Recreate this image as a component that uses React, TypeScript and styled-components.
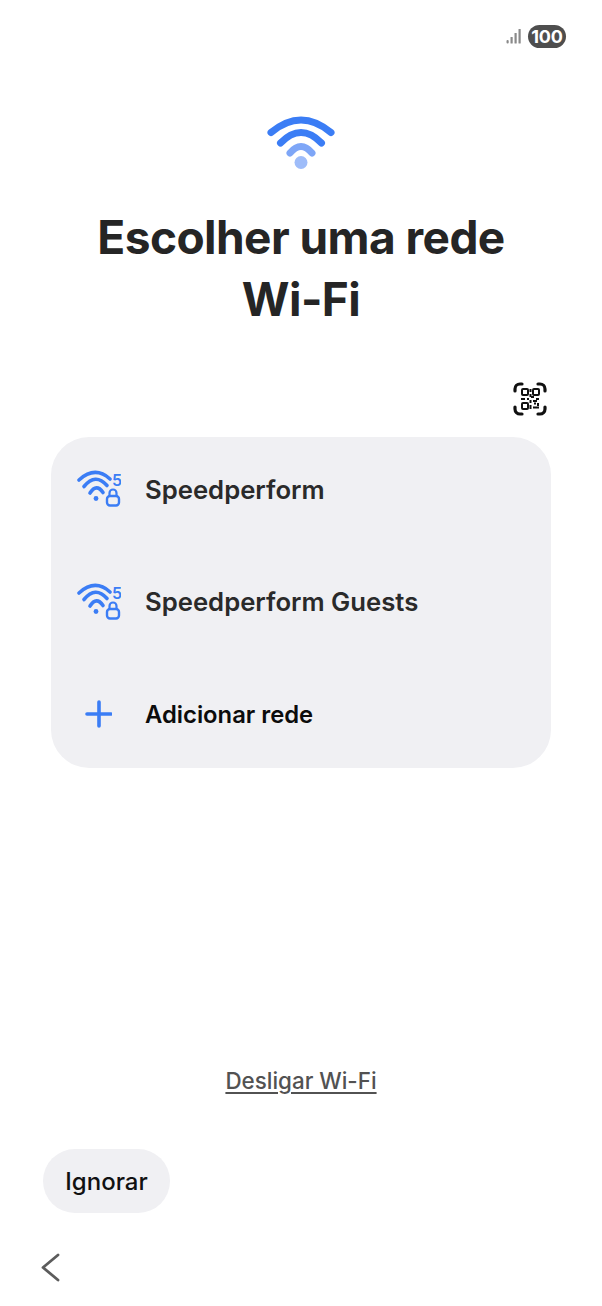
import React from "react";
import styled, { createGlobalStyle } from "styled-components";

const Global = createGlobalStyle`
  html, body { margin: 0; padding: 0; background: #fff; }
  body { font-family: Inter, "Noto Sans", "Liberation Sans", sans-serif; }
`;

const Page = styled.div`
  width: 602px;
  height: 1306px;
  display: flex;
  flex-direction: column;
  overflow: hidden;
  background: #fff;
`;

const StatusBar = styled.div`
  display: flex;
  justify-content: flex-end;
  align-items: center;
  gap: 5px;
  height: 22px;
  margin-top: 25px;
  padding-right: 36px;
`;

const Battery = styled.div`
  width: 38px;
  height: 23px;
  border-radius: 12px;
  background: #4e4e4e;
  color: #fff;
  font-size: 18px;
  font-weight: 700;
  letter-spacing: -0.2px;
  display: flex;
  align-items: center;
  justify-content: center;
`;

const HeroIcon = styled.div`
  display: flex;
  justify-content: center;
  margin-top: 69px;
  height: 54px;
`;

const Title = styled.h1`
  margin: 36px 0 0;
  text-align: center;
  font-size: 46px;
  line-height: 62px;
  font-weight: 700;
  letter-spacing: -0.55px;
  color: #252525;
`;

const QrRow = styled.div`
  display: flex;
  justify-content: flex-end;
  padding-right: 55px;
  margin-top: 52px;
  height: 34px;
`;

const Card = styled.div`
  margin: 21px 51px 0;
  height: 331px;
  border-radius: 38px;
  background: #f0f0f3;
  padding: 0 24px 0 23px;
  display: flex;
  flex-direction: column;
  gap: 8.5px;
  box-sizing: border-box;
`;

const Row = styled.div`
  height: 104px;
  display: flex;
  align-items: center;
  gap: 24px;
`;

const IconSlot = styled.div`
  width: 47px;
  display: flex;
  justify-content: center;
`;

const RowLabel = styled.span<{ $strong?: boolean }>`
  font-size: ${(p) => (p.$strong ? "23.8px" : "25.7px")};
  font-weight: 600;
  color: ${(p) => (p.$strong ? "#0c0c0c" : "#2a2a2a")};
`;

const Spacer = styled.div`
  flex: 1;
`;

const TurnOff = styled.a`
  align-self: center;
  font-size: 22.4px;
  font-weight: 500;
  color: #525252;
  text-decoration: underline;
  text-underline-offset: 3px;
  margin-bottom: 55px;
`;

const Skip = styled.button`
  align-self: flex-start;
  margin-left: 43px;
  width: 127px;
  height: 64px;
  border: 0;
  border-radius: 32px;
  background: #f0f0f3;
  color: #111;
  font-family: inherit;
  font-size: 24px;
  font-weight: 550;
`;

const NavBar = styled.div`
  height: 93px;
  box-sizing: border-box;
  padding: 40px 0 0 40px;
  display: flex;
  align-items: flex-start;
`;

const Signal = () => (
  <svg width="17" height="17" viewBox="0 0 17 17" fill="#8a8a8a">
    <rect x="0.5" y="12" width="2.2" height="3.5" rx="1" />
    <rect x="4.5" y="9" width="2.2" height="6.5" rx="0.6" />
    <rect x="8.5" y="5" width="2.2" height="10.5" rx="0.6" />
    <rect x="12.5" y="1" width="2.2" height="14.5" rx="0.6" />
  </svg>
);

const WifiHero = () => (
  <svg width="68" height="54" viewBox="0 0 68 54" fill="none" strokeLinecap="round">
    <path d="M4 16.5 Q34 -8.5 64 16.5" stroke="#3b7df5" strokeWidth="7" />
    <path d="M13.5 27 Q34 6 54.5 27" stroke="#3b7df5" strokeWidth="7" />
    <path d="M23 37 Q34 24 45 37" stroke="#7ea6f7" strokeWidth="7" />
    <circle cx="34" cy="46.5" r="6.5" fill="#9ebcf9" />
  </svg>
);

const QrIcon = () => (
  <svg width="34" height="34" viewBox="0 0 34 34" fill="none" stroke="#111" strokeWidth="3.2" strokeLinecap="round">
    <path d="M9 2 H7 A5 5 0 0 0 2 7 V9" />
    <path d="M25 2 H27 A5 5 0 0 1 32 7 V9" />
    <path d="M9 32 H7 A5 5 0 0 1 2 27 V25" />
    <path d="M25 32 H27 A5 5 0 0 0 32 27 V25" />
    <g strokeWidth="2" strokeLinecap="butt">
      <rect x="9" y="7" width="6" height="6" rx="1" />
      <rect x="20" y="7" width="6" height="6" rx="1" />
      <rect x="9" y="21" width="6" height="6" rx="1" />
      <path d="M17.5 7v3M17.5 12v3M8 17h4M14 17h2M18 15h3M23 17h3M17.5 18v3M20 19h4M21 21.5h2M25 21v3M17.5 23v4M20 25.5h6" />
    </g>
  </svg>
);

const WifiLocked = () => (
  <svg width="46" height="40" viewBox="0 0 46 40" fill="none" stroke="#3b7df5" strokeLinecap="round">
    <path d="M4 11 Q20 -3.5 35 10" strokeWidth="3.6" />
    <path d="M9 17.5 Q20.5 3.5 32 16.5" strokeWidth="3.6" />
    <path d="M15 24 Q21.5 14 28 23.5" strokeWidth="3.6" />
    <circle cx="21" cy="29.5" r="2.4" fill="#3b7df5" stroke="none" />
    <rect x="32" y="27" width="12" height="9.5" rx="3" strokeWidth="2.4" />
    <path d="M34.5 27 V24 A3.5 3.5 0 0 1 41.5 24 V27" strokeWidth="2.2" />
    <text x="37" y="16.5" fontSize="16" fontWeight="600" fill="#3b7df5" stroke="none" fontFamily="Inter, sans-serif">5</text>
  </svg>
);

const Plus = () => (
  <svg width="28" height="28" viewBox="0 0 28 28" fill="none" stroke="#3b7df5" strokeWidth="3.6" strokeLinecap="round">
    <path d="M15 2 V26 M3 14 H27" />
  </svg>
);

const BackChevron = () => (
  <svg width="22" height="30" viewBox="0 0 22 30" fill="none" stroke="#5c5c5c" strokeWidth="2.8" strokeLinecap="round" strokeLinejoin="round">
    <path d="M18 2 L3 14.5 L18 27" />
  </svg>
);

export default function App() {
  return (
    <Page>
      <Global />
      <StatusBar>
        <Signal />
        <Battery>100</Battery>
      </StatusBar>
      <HeroIcon>
        <WifiHero />
      </HeroIcon>
      <Title>
        Escolher uma rede
        <br />
        Wi-Fi
      </Title>
      <QrRow>
        <QrIcon />
      </QrRow>
      <Card>
        <Row>
          <IconSlot><WifiLocked /></IconSlot>
          <RowLabel>Speedperform</RowLabel>
        </Row>
        <Row>
          <IconSlot><WifiLocked /></IconSlot>
          <RowLabel>Speedperform Guests</RowLabel>
        </Row>
        <Row>
          <IconSlot><Plus /></IconSlot>
          <RowLabel $strong>Adicionar rede</RowLabel>
        </Row>
      </Card>
      <Spacer />
      <TurnOff>Desligar Wi-Fi</TurnOff>
      <Skip>Ignorar</Skip>
      <NavBar>
        <BackChevron />
      </NavBar>
    </Page>
  );
}
